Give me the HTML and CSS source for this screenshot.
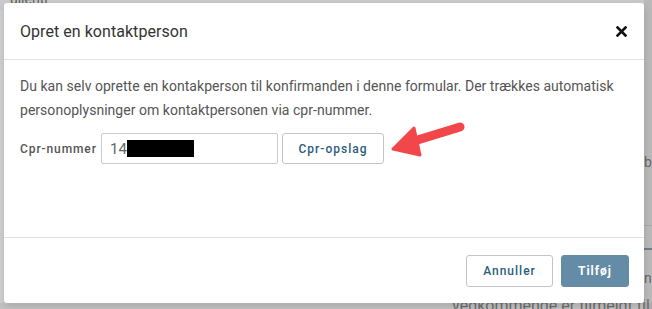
FILE: index.html
```html
<!DOCTYPE html>
<html lang="da">
<head>
<meta charset="utf-8">
<link rel="stylesheet" href="styles.css">
</head>
<body>
<div class="page">
  <div class="page-top"><span class="crumb">ullentl</span></div>
  <div class="page-side">
    <div class="side-text ba">ba</div>
    <div class="side-rule"></div>
    <div class="side-blue"></div>
    <div class="side-text n">n</div>
  </div>
  <div class="page-bottom">vedkommende er tilmeldt til kon</div>
</div>

<div class="overlay"></div>

<div class="modal">
  <div class="modal-header">
    <h1 class="modal-title">Opret en kontaktperson</h1>
    <button class="close" aria-label="Luk">
      <svg width="11" height="11" viewBox="0 0 11 11"><path d="M1.5 1.5 L9.5 9.5 M9.5 1.5 L1.5 9.5" stroke="#111" stroke-width="2.6" stroke-linecap="square"/></svg>
    </button>
  </div>
  <div class="modal-body">
    <p class="intro">Du kan selv oprette en kontakperson til konfirmanden i denne formular. Der trækkes automatisk personoplysninger om kontaktpersonen via cpr-nummer.</p>
    <div class="cpr-row">
      <label class="cpr-label">Cpr-nummer</label>
      <div class="cpr-input"><span class="cpr-value">14</span><span class="redact"></span></div>
      <button class="btn btn-outline btn-lookup">Cpr-opslag</button>
    </div>
  </div>
  <div class="modal-footer">
    <button class="btn btn-outline btn-cancel">Annuller</button>
    <button class="btn btn-primary">Tilføj</button>
  </div>
</div>

<svg class="arrow" width="90" height="50" viewBox="0 0 90 50">
  <path d="M73 10 L24 25" stroke="#f2474a" stroke-width="9" stroke-linecap="round"/>
  <path d="M6 32 L27 11 L33 38 Z" fill="#f2474a" stroke="#f2474a" stroke-width="3" stroke-linejoin="round"/>
</svg>
</body>
</html>
```
FILE: styles.css
```css
* { box-sizing: border-box; }
html, body { margin: 0; padding: 0; }
body {
  width: 652px;
  height: 309px;
  overflow: hidden;
  position: relative;
  font-family: Roboto, "Noto Sans", Arial, sans-serif;
  background: #f4f4f4;
}
.page { position: absolute; inset: 0; }
.page-top {
  height: 10px;
  background: #ececec;
  padding-left: 10px;
  font-size: 14px;
  line-height: 10px;
  color: #6f6f6f;
  overflow: hidden;
}
.crumb { position: relative; top: -6px; }
.page-side {
  position: absolute;
  left: 644px;
  top: 0;
  width: 8px;
  height: 309px;
  background: #d8d8d8;
}
.side-text { position: absolute; left: 0; font-size: 14px; color: #7a7a7a; }
.ba { top: 154px; }
.n { top: 270px; }
.side-rule { position: absolute; top: 225px; left: 0; right: 0; height: 1px; background: #c4c4c4; }
.side-blue { position: absolute; top: 248px; left: 0; right: 0; height: 2px; background: #7e92a2; }
.page-bottom {
  position: absolute;
  left: 452px;
  top: 296px;
  font-size: 16px;
  color: #8a8a8a;
  white-space: nowrap;
}
.overlay {
  position: absolute;
  inset: 0;
  background: linear-gradient(to bottom, rgba(0,0,0,0.14) 0, rgba(0,0,0,0.14) 302px, rgba(0,0,0,0.2) 304px, rgba(0,0,0,0.2) 100%);
}
.modal {
  position: absolute;
  left: 4px;
  top: 3px;
  width: 640px;
  height: 300px;
  background: #fff;
  border-radius: 3px;
  box-shadow: 0 3px 8px rgba(0,0,0,0.15);
  display: flex;
  flex-direction: column;
}
.modal-header {
  height: 57px;
  display: flex;
  align-items: center;
  justify-content: space-between;
  padding: 0 17px 0 16px;
  border-bottom: 1px solid #e2e2e2;
}
.modal-title {
  margin: 0;
  font-size: 16px;
  font-weight: 400;
  color: #333;
  letter-spacing: 0.05px;
}
.close {
  border: 0;
  background: none;
  padding: 0;
  display: flex;
  margin-top: 0;
}
.modal-body {
  flex: 1;
  padding: 14px 16px 0 16px;
  border-bottom: 1px solid #e2e2e2;
}
.intro {
  margin: 0;
  font-size: 14px;
  line-height: 24px;
  color: #555;
  letter-spacing: 0.03px;
}
.cpr-row {
  display: flex;
  align-items: center;
  margin-top: 11px;
}
.cpr-label {
  font-size: 12px;
  font-weight: 500;
  color: #555;
  letter-spacing: 0.9px;
  width: 81px;
}
.cpr-input {
  width: 177px;
  height: 31px;
  border: 1px solid #ccc;
  border-radius: 2px;
  display: flex;
  align-items: center;
  padding-left: 8px;
}
.cpr-value { font-size: 15px; color: #666; }
.redact {
  display: inline-block;
  width: 67px;
  height: 17px;
  background: #000;
  margin-left: 0;
}
.btn {
  font-family: Roboto, "Noto Sans", Arial, sans-serif;
  font-size: 12px;
  font-weight: 500;
  letter-spacing: 1px;
  border-radius: 3px;
  padding: 0;
  cursor: pointer;
}
.btn-outline {
  background: #fff;
  border: 1px solid #c4c4c4;
  color: #2d5c7c;
}
.btn-lookup {
  width: 102px;
  height: 31px;
  margin-left: 4px;
}
.modal-footer {
  height: 65px;
  display: flex;
  justify-content: flex-end;
  align-items: center;
  padding: 1px 15px 0 0;
  gap: 8px;
}
.btn-cancel { width: 87px; height: 32px; }
.btn-primary {
  width: 68px;
  height: 32px;
  background: #648ca6;
  border: 1px solid #648ca6;
  color: #fff;
  font-weight: 700;
}
.arrow {
  position: absolute;
  left: 387px;
  top: 117px;
}
```
